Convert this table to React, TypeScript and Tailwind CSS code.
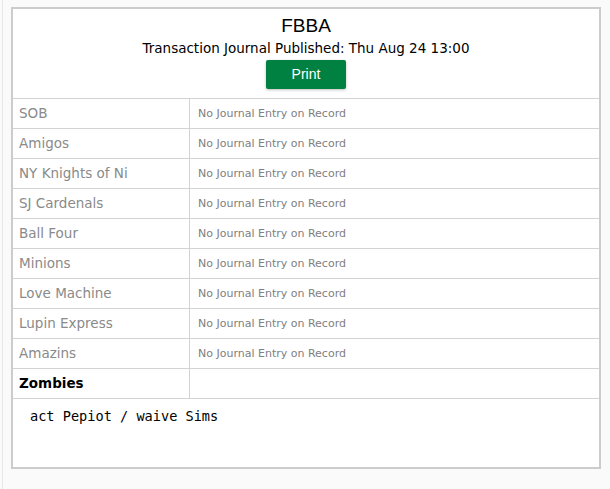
const TEAMS = [
  'SOB',
  'Amigos',
  'NY Knights of Ni',
  'SJ Cardenals',
  'Ball Four',
  'Minions',
  'Love Machine',
  'Lupin Express',
  'Amazins',
];

const sans = 'font-["DejaVu_Sans",sans-serif]';

function TeamRow({ name }: { name: string }) {
  return (
    <div className="flex h-[30px] border-b border-[#d3d3d3]">
      <div className={`w-[177px] shrink-0 border-r border-[#d3d3d3] pl-[6px] flex items-center text-[13.5px] text-[#8a8a8a] ${sans}`}>
        {name}
      </div>
      <div className={`flex-1 pl-[8px] pt-[2px] flex items-center text-[11px] text-[#808080] ${sans}`}>
        No Journal Entry on Record
      </div>
    </div>
  );
}

export default function App() {
  return (
    <div className="min-h-screen bg-[#fafafa] pl-[2px]">
      <div className="min-h-screen border-l border-[#e8e8e8] pl-[8px] pt-[7px]">
        <div className="w-[590px] h-[462px] border-2 border-[#cccccc] bg-white flex flex-col">
          <div className="flex flex-col items-center border-b border-[#d3d3d3] pt-[6px] pb-[9px]">
            <div className="font-['Liberation_Sans',Arial,sans-serif] text-[19px] leading-[22px] text-black">FBBA</div>
            <div className={`mt-[2px] text-[13.5px] leading-[18px] text-black ${sans}`}>
              Transaction Journal Published: Thu Aug 24 13:00
            </div>
            <button className="mt-[3px] w-[80px] h-[29px] rounded-[2px] bg-[#008142] text-white text-[14px] font-['Liberation_Sans',Arial,sans-serif] shadow-[0_1px_3px_rgba(0,0,0,0.25)]">
              Print
            </button>
          </div>
          {TEAMS.map((t) => (
            <TeamRow key={t} name={t} />
          ))}
          <div className="flex h-[30px] border-b border-[#d3d3d3]">
            <div className={`w-[177px] shrink-0 border-r border-[#d3d3d3] pl-[6px] flex items-center text-[13.5px] font-bold text-black ${sans}`}>
              Zombies
            </div>
            <div className="flex-1" />
          </div>
          <pre className="pl-[17px] pt-[8px] text-[13.6px] leading-[18px] text-black font-['DejaVu_Sans_Mono',monospace]">
            act Pepiot / waive Sims
          </pre>
        </div>
      </div>
    </div>
  );
}
